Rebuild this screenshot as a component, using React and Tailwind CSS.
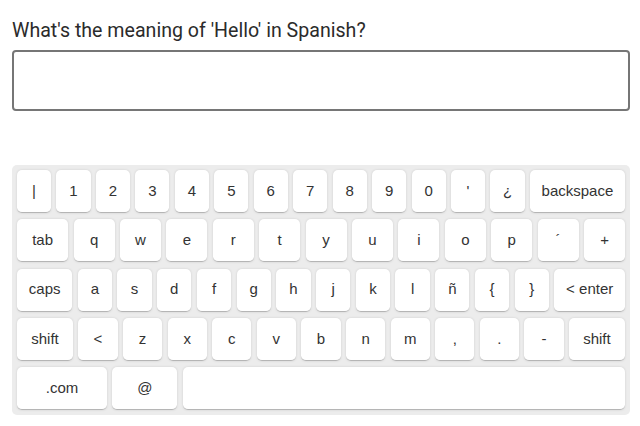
const rows = [
  ['|', '1', '2', '3', '4', '5', '6', '7', '8', '9', '0', "'", '¿', '{backspace}'],
  ['{tab}', 'q', 'w', 'e', 'r', 't', 'y', 'u', 'i', 'o', 'p', '´', '+'],
  ['{caps}', 'a', 's', 'd', 'f', 'g', 'h', 'j', 'k', 'l', 'ñ', '{', '}', '{enter}'],
  ['{shift}', '<', 'z', 'x', 'c', 'v', 'b', 'n', 'm', ',', '.', '-', '{shift}'],
  ['.com', '@', '{space}'],
];

const labels = {
  '{backspace}': 'backspace',
  '{tab}': 'tab',
  '{caps}': 'caps',
  '{enter}': '< enter',
  '{shift}': 'shift',
  '{space}': '\u00a0',
};

const base =
  'h-[43px] bg-white rounded-[5px] border-b border-[#b5b5b5] shadow-[0_0_3px_-1px_rgba(0,0,0,0.3)] flex items-center justify-center px-[5.4px] text-[15px] text-[#333] cursor-pointer';

const keyClass = (k) => {
  if (k === '.com') return `${base} w-[90px] shrink-0`;
  if (k === '@') return `${base} w-[65px] shrink-0`;
  if (k === '{space}') return `${base} grow`;
  if (labels[k]) return `${base} grow whitespace-nowrap`;
  return `${base} grow basis-[21.5px] w-[21.5px]`;
};

export default function App() {
  return (
    <div className="min-h-screen bg-white font-['Liberation_Sans',Arial,sans-serif]">
      <div className="w-[618px] ml-3 pt-[17px]">
        <h2 className="font-['Roboto',sans-serif] text-[19.6px] leading-[27px] text-[#2b2b2b] mb-[6px] whitespace-nowrap">
          What's the meaning of 'Hello' in Spanish?
        </h2>
        <input
          type="text"
          className="block w-full h-[61px] border-2 border-[#767676] rounded-[4px] px-2 text-base outline-none"
        />
        <div className="mt-[54px] bg-[#ececec] rounded-[5px] p-[5px] flex flex-col gap-[6.25px] select-none">
          {rows.map((row, i) => (
            <div key={i} className="flex gap-[5.4px]">
              {row.map((k, j) => (
                <div key={j} className={keyClass(k)}>
                  {labels[k] ?? k}
                </div>
              ))}
            </div>
          ))}
        </div>
      </div>
    </div>
  );
}
